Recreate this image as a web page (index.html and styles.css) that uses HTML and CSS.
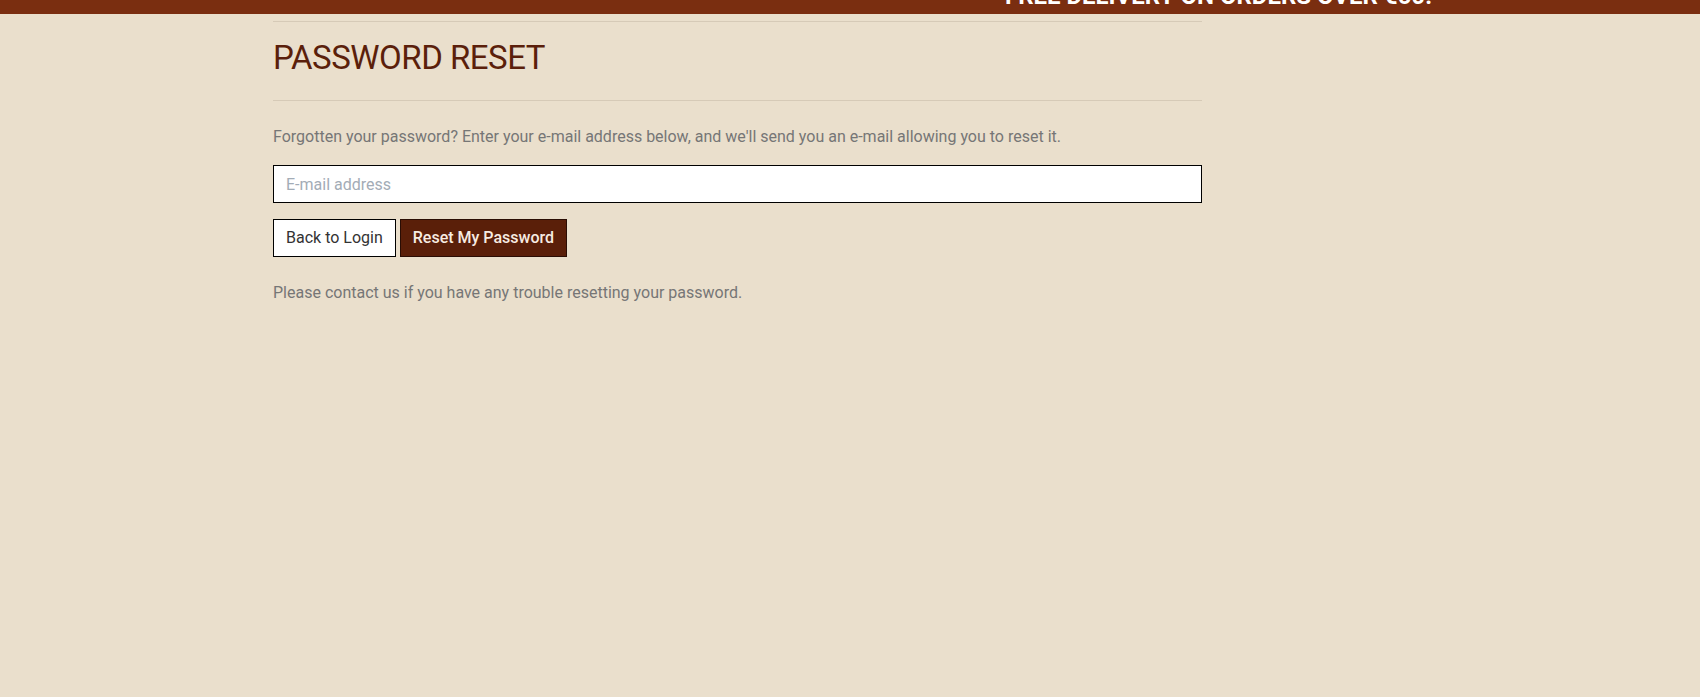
FILE: index.html
```html
<!DOCTYPE html>
<html lang="en">
<head>
<meta charset="utf-8">
<title>Password Reset</title>
<link rel="stylesheet" href="styles.css">
</head>
<body>
<header class="topbar">
  <div class="topbar-text">FREE DELIVERY ON ORDERS OVER €60!</div>
</header>
<main class="page">
  <section class="content">
    <hr class="rule">
    <h1 class="title">PASSWORD RESET</h1>
    <hr class="rule">
    <p class="lead">Forgotten your password? Enter your e-mail address below, and we'll send you an e-mail allowing you to reset it.</p>
    <form class="form">
      <input class="field" type="email" placeholder="E-mail address">
      <div class="actions">
        <a class="btn btn-light" href="#">Back to Login</a>
        <button class="btn btn-dark" type="submit">Reset My Password</button>
      </div>
    </form>
    <p class="note">Please contact us if you have any trouble resetting your password.</p>
  </section>
</main>
</body>
</html>
```

FILE: styles.css
```css
* { box-sizing: border-box; }
html, body {
  margin: 0;
  padding: 0;
  background: #eadfcc;
  font-family: Roboto, "Liberation Sans", Arial, sans-serif;
  height: 100%;
}
.topbar {
  height: 14px;
  background: #7a2e10;
  overflow: hidden;
}
.topbar-text {
  color: #ffffff;
  font-weight: 700;
  font-size: 24px;
  line-height: 28px;
  margin-top: -18px;
  padding-left: 1005px;
  white-space: nowrap;
}
.page {
  padding-left: 273px;
}
.content {
  width: 929px;
}
.rule {
  border: 0;
  border-top: 1px solid #d6cab7;
  margin: 0;
  height: 0;
}
.content > .rule:first-child {
  margin-top: 7px;
}
.title {
  margin: 15px 0 21px;
  font-size: 33px;
  line-height: 42px;
  letter-spacing: -0.5px;
  font-weight: 400;
  color: #5b1f0b;
}
.lead {
  margin: 24px 0 16px;
  font-size: 16px;
  line-height: 24px;
  color: #767676;
}
.form {
  margin: 0;
}
.field {
  display: block;
  width: 100%;
  height: 38px;
  border: 1px solid #000;
  background: #fff;
  padding: 6px 12px;
  font-family: inherit;
  font-size: 16px;
  line-height: 24px;
  color: #333;
  outline: none;
}
.field::placeholder {
  color: #a3acb6;
}
.actions {
  display: flex;
  gap: 4px;
  margin-top: 16px;
}
.btn {
  display: inline-block;
  height: 38px;
  padding: 6px 12px;
  font-family: inherit;
  font-size: 16px;
  line-height: 24px;
  border: 1px solid #000;
  text-decoration: none;
  cursor: pointer;
}
.btn-light {
  background: #fff;
  color: #333;
}
.btn-dark {
  background: #5a1f09;
  border-color: #2a0d04;
  color: #f7ece2;
  font-weight: 500;
}
.note {
  margin: 24px 0 0;
  font-size: 16px;
  line-height: 24px;
  color: #767676;
}
```
